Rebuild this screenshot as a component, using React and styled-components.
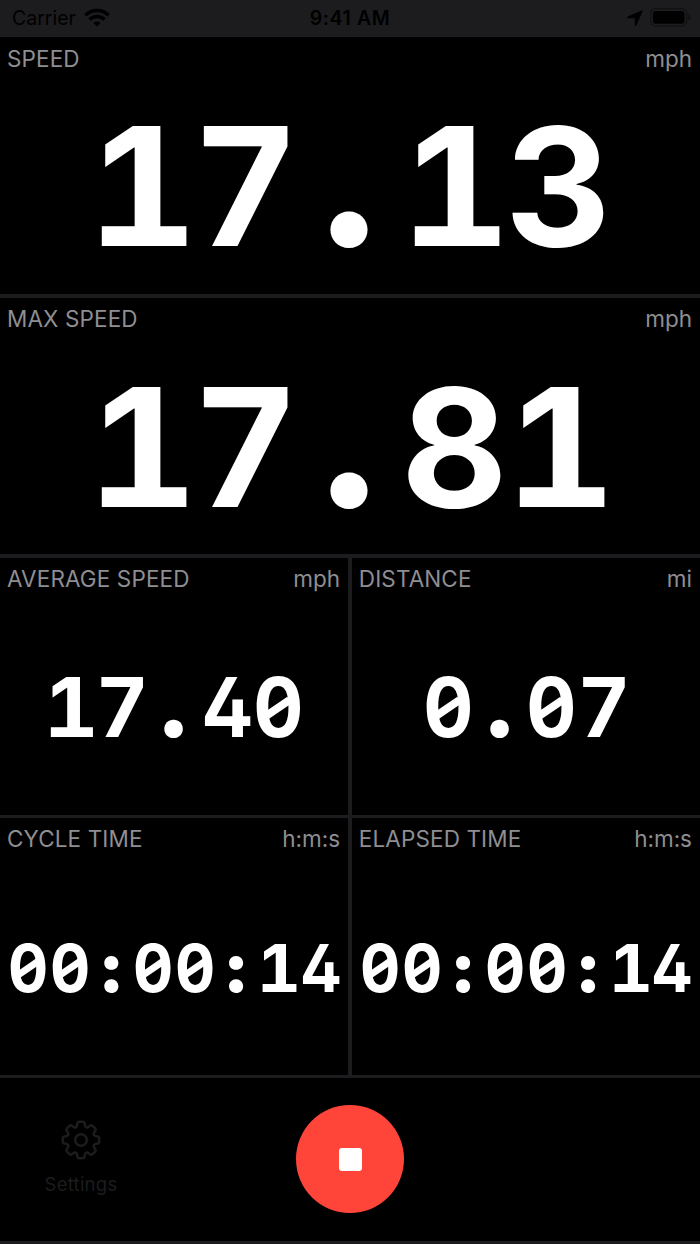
import React from "react";
import styled, { createGlobalStyle } from "styled-components";

const GlobalStyle = createGlobalStyle`
  * {
    box-sizing: border-box;
  }
  body {
    margin: 0;
    background: #1c1c1e;
    font-family: Inter, "Liberation Sans", sans-serif;
  }
`;

const Container = styled.div`
  width: 700px;
  height: 1244px;
  display: flex;
  flex-direction: column;
  overflow: hidden;
  background: #1c1c1e;
`;

const StatusBar = styled.div`
  height: 37.35px;
  flex: none;
  display: grid;
  grid-template-columns: 1fr auto 1fr;
  align-items: center;
  padding: 0 9px 2px 12px;
  color: #000;
  font-size: 19.5px;
`;
const Carrier = styled.div`
  display: flex;
  align-items: center;
  gap: 8px;
`;
const Clock = styled.div`
  font-weight: 600;
  letter-spacing: 0.6px;
  margin-right: 3px;
`;
const Indicators = styled.div`
  display: flex;
  align-items: center;
  justify-content: flex-end;
  gap: 7px;
`;

const Dashboard = styled.div`
  display: grid;
  grid-template-columns: 1fr 1fr;
  grid-auto-rows: 256.6px;
  gap: 3.7px;
  flex: none;
`;
const Panel = styled.div`
  grid-column: span ${({ $wide }) => ($wide ? 2 : 1)};
  background: #000;
  display: flex;
  flex-direction: column;
`;
const PanelHeader = styled.div`
  height: 44px;
  display: flex;
  justify-content: space-between;
  padding: 7.2px 8px 0 7px;
  color: #8e8e93;
  font-size: 22.5px;
  line-height: 27px;
`;
const Label = styled.span`
  letter-spacing: 0.12px;
`;
const Unit = styled.span``;
const Value = styled.div`
  flex: 1;
  display: flex;
  align-items: center;
  justify-content: center;
  color: #fff;
  font-size: ${({ $size }) => $size}px;
  font-weight: 700;
  line-height: 1;
  font-feature-settings: "tnum", "cv02";
`;
const Char = styled.span`
  width: 0.635em;
  display: flex;
  justify-content: center;
`;
const Digit = styled.span`
  transform: translateX(${({ $shift }) => $shift || 0}em)
    scaleX(${({ $stretch }) => $stretch || 1});
`;
// heavier dots than the digits around them, on the same baseline
const Dot = styled.span`
  transform: translateX(-0.006em);
  > span {
    font-size: ${({ $scale }) => $scale}em;
    font-weight: 900;
    line-height: 0;
  }
`;
// zero with a short slash inside of its bowl
const Zero = styled.span`
  position: relative;
  transform: scaleX(0.95);
  &::after {
    content: "";
    position: absolute;
    left: 50%;
    top: 50%;
    width: 0.36em;
    height: 0.1em;
    background: currentColor;
    transform: translate(-50%, -50%) rotate(-33deg);
  }
`;

const Footer = styled.div`
  height: 162.4px;
  margin-top: 3.5px;
  flex: none;
  display: grid;
  grid-template-columns: 162px 1fr 162px;
  align-items: center;
  justify-items: center;
  background: #000;
`;
const SettingsButton = styled.div`
  display: flex;
  flex-direction: column;
  align-items: center;
  gap: 12px;
  padding-bottom: 3px;
  color: #1c1c1e;
  font-size: 18.5px;
  line-height: 24px;
  letter-spacing: 0.25px;
`;
const StopButton = styled.div`
  width: 108px;
  height: 108px;
  border-radius: 50%;
  background: #ff453a;
  display: flex;
  align-items: center;
  justify-content: center;
`;
const StopMark = styled.div`
  width: 23px;
  height: 23px;
  border-radius: 3px;
  background: #fff;
`;

const panels = [
  { label: "SPEED", unit: "mph", value: "17.13", size: 164.4, wide: true },
  { label: "MAX SPEED", unit: "mph", value: "17.81", size: 164.4, wide: true },
  { label: "AVERAGE SPEED", unit: "mph", value: "17.40", size: 81.8 },
  { label: "DISTANCE", unit: "mi", value: "0.07", size: 81.8 },
  { label: "CYCLE TIME", unit: "h:m:s", value: "00:00:14", size: 65.6 },
  { label: "ELAPSED TIME", unit: "h:m:s", value: "00:00:14", size: 65.6 },
];

const gearPath = () => {
  const at = (deg, r) => {
    const a = ((deg - 90) * Math.PI) / 180;
    return `${(20 + r * Math.cos(a)).toFixed(2)} ${(20 + r * Math.sin(a)).toFixed(2)}`;
  };
  let d = "";
  for (let i = 0; i < 8; i++) {
    const t = i * 45;
    d += `${i ? "L" : "M"}${at(t - 16, 14.8)}L${at(t - 12, 17)}Q${at(t - 10.5, 18.4)} ${at(t - 7, 18.3)}`;
    d += `L${at(t + 7, 18.3)}Q${at(t + 10.5, 18.4)} ${at(t + 12, 17)}L${at(t + 16, 14.8)}`;
    d += `Q${at(t + 22.5, 12.8)} ${at(t + 29, 14.8)}`;
  }
  return d + "Z";
};

const Gear = () => (
  <svg width="40" height="40" viewBox="0 0 40 40" fill="none" stroke="currentColor" strokeWidth="2.5" strokeLinejoin="round">
    <path d={gearPath()} />
    <circle cx="20" cy="20" r="5.8" />
  </svg>
);

const Wifi = () => (
  <svg width="26" height="19" viewBox="0 0 26 19" fill="none" stroke="#000" strokeWidth="3.5">
    <path d="M1.4 7.2a16.6 16.6 0 0 1 23.2 0" />
    <path d="M5.5 11.6a10.8 10.8 0 0 1 15 0" />
    <path d="M13 18.6l-3.6-3.7a5.2 5.2 0 0 1 7.2 0z" fill="#000" stroke="none" />
  </svg>
);

const LocationArrow = () => (
  <svg width="16" height="16" viewBox="0 0 16 16">
    <path d="M15 1L8.9 15H8.4V7.7H1V7.2Z" fill="#000" stroke="#000" strokeWidth="1.3" strokeLinejoin="round" />
  </svg>
);

const Battery = () => (
  <svg width="41" height="19" viewBox="0 0 41 19">
    <rect x="0.7" y="0.7" width="36" height="17.4" rx="5" fill="none" stroke="#000" strokeOpacity="0.4" strokeWidth="1.3" />
    <rect x="3" y="3" width="31.4" height="12.8" rx="2.8" fill="#000" />
    <path d="M38.3 6.3Q40.5 7.2 40.5 9.4T38.3 12.5Z" fill="#000" fillOpacity="0.45" />
  </svg>
);

const renderChar = (c) => {
  switch (c) {
    case "0":
      return <Zero>0</Zero>;
    case ".":
      return (
        <Dot $scale={1.12}>
          <span>.</span>
        </Dot>
      );
    case ":":
      return (
        <Dot $scale={1.06}>
          <span>:</span>
        </Dot>
      );
    case "1":
      return <Digit $stretch={1.045} $shift={0.009}>1</Digit>;
    case "4":
      return <Digit $stretch={0.95} $shift={0.015}>4</Digit>;
    default:
      return <Digit>{c}</Digit>;
  }
};

const App = () => {
  return (
    <Container>
      <GlobalStyle />
      <StatusBar>
        <Carrier>
          Carrier <Wifi />
        </Carrier>
        <Clock>9:41 AM</Clock>
        <Indicators>
          <LocationArrow />
          <Battery />
        </Indicators>
      </StatusBar>
      <Dashboard>
        {panels.map((p) => (
          <Panel key={p.label} $wide={p.wide}>
            <PanelHeader>
              <Label>{p.label}</Label>
              <Unit>{p.unit}</Unit>
            </PanelHeader>
            <Value $size={p.size}>
              {p.value.split("").map((c, i) => (
                <Char key={i}>{renderChar(c)}</Char>
              ))}
            </Value>
          </Panel>
        ))}
      </Dashboard>
      <Footer>
        <SettingsButton>
          <Gear />
          Settings
        </SettingsButton>
        <StopButton>
          <StopMark />
        </StopButton>
      </Footer>
    </Container>
  );
};

export default App;
